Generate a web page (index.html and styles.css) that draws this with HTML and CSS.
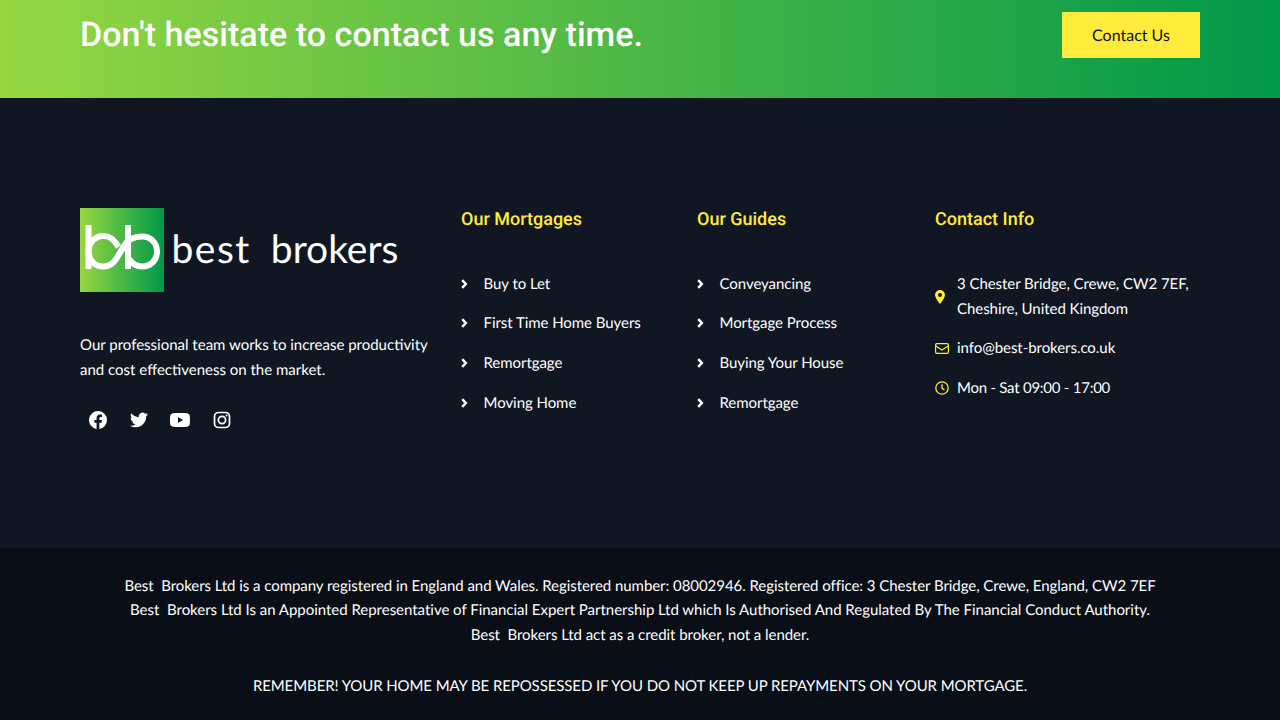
FILE: index.html
```html
<!DOCTYPE html>
<html lang="en">
  <head>
    <meta charset="UTF-8" />
    <meta name="viewport" content="width=device-width, initial-scale=1.0" />
    <title>Best Brokers</title>
    <link rel="stylesheet" href="styles.css">
  </head>
  <body>
    <section class="cta">
      <h2>Don't hesitate to contact us any time.</h2>
      <a class="cta-btn" href="#">Contact Us</a>
    </section>

    <footer class="footer">
      <div class="footer-about">
        <div class="logo">
          <div class="logo-mark">
            <svg width="84" height="84" viewBox="0 0 84 84" fill="none" stroke="#fff" stroke-width="6">
              <path d="M8.500 17V61" />
              <path d="M8.500 43.500C8.500 34.500 15 28 23.500 28C29 28 32.500 30.500 35.500 34.500L38.500 39" />
              <path d="M8.500 43.500C8.500 52.500 15 58.500 23.500 58.500C29.500 58.500 33.500 55 36.500 50.500L44 38C47.500 32 53 28.500 62 28.500C71 28.500 77 35 77 43.500C77 52 71 58.500 62 58.500C56 58.500 52 55.500 49 51" />
              <path d="M48 17V61" />
            </svg>
          </div>
          <span class="logo-word"><span class="logo-best">best</span> brokers</span>
        </div>
        <p>Our professional team works to increase productivity and cost effectiveness on the market.</p>
        <div class="social">
          <svg width="18" height="18" viewBox="0 0 24 24" fill="#fff"><path d="M24 12a12 12 0 1 0-13.900 11.900v-8.400H7.100V12h3V9.400c0-3 1.800-4.700 4.500-4.700 1.300 0 2.700.2 2.700.2v3h-1.500c-1.500 0-2 .9-2 1.900V12h3.400l-.5 3.500h-2.900v8.400A12 12 0 0 0 24 12z"/></svg>
          <svg width="18" height="18" viewBox="0 0 24 24" fill="#fff"><path d="M23.950 4.570a10 10 0 0 1-2.820.77 4.960 4.960 0 0 0 2.160-2.720c-.95.550-2 .96-3.130 1.190a4.920 4.920 0 0 0-8.380 4.480C7.690 8.090 4.060 6.130 1.640 3.160a4.820 4.820 0 0 0-.67 2.480c0 1.710.87 3.210 2.190 4.100a4.900 4.900 0 0 1-2.230-.62v.06a4.920 4.920 0 0 0 3.950 4.830 5 5 0 0 1-2.210.08 4.940 4.940 0 0 0 4.600 3.420A9.870 9.870 0 0 1 0 19.540a14 14 0 0 0 7.560 2.210c9.050 0 14-7.500 14-13.980 0-.21 0-.42-.02-.63a9.940 9.940 0 0 0 2.460-2.550z"/></svg>
          <svg width="20" height="20" viewBox="0 0 24 24" fill="#fff"><path d="M23.500 6.200a3 3 0 0 0-2.100-2.100C19.500 3.500 12 3.500 12 3.500s-7.500 0-9.400.6A3 3 0 0 0 .5 6.200C0 8.100 0 12 0 12s0 3.900.5 5.800a3 3 0 0 0 2.100 2.100c1.900.6 9.400.6 9.400.6s7.500 0 9.400-.6a3 3 0 0 0 2.100-2.100c.5-1.900.5-5.800.5-5.800s0-3.900-.5-5.800zM9.600 15.600V8.400l6.200 3.600-6.200 3.600z"/></svg>
          <svg width="18" height="18" viewBox="0 0 24 24" fill="none" stroke="#fff" stroke-width="2.300"><rect x="2" y="2" width="20" height="20" rx="5.500" /><circle cx="12" cy="12" r="4.800" /><circle cx="18.100" cy="5.900" r="1.300" fill="#fff" stroke="none" /></svg>
        </div>
      </div>

      <div class="footer-col">
        <h4>Our Mortgages</h4>
        <ul class="links">
          <li><svg class="chev" width="7" height="10" viewBox="0 0 7 10" fill="none" stroke="#fff" stroke-width="2.500"><path d="M1.200 1.200L4.800 5L1.200 8.800" /></svg>Buy to Let</li>
          <li><svg class="chev" width="7" height="10" viewBox="0 0 7 10" fill="none" stroke="#fff" stroke-width="2.500"><path d="M1.200 1.200L4.800 5L1.200 8.800" /></svg>First Time Home Buyers</li>
          <li><svg class="chev" width="7" height="10" viewBox="0 0 7 10" fill="none" stroke="#fff" stroke-width="2.500"><path d="M1.200 1.200L4.800 5L1.200 8.800" /></svg>Remortgage</li>
          <li><svg class="chev" width="7" height="10" viewBox="0 0 7 10" fill="none" stroke="#fff" stroke-width="2.500"><path d="M1.200 1.200L4.800 5L1.200 8.800" /></svg>Moving Home</li>
        </ul>
      </div>

      <div class="footer-col">
        <h4>Our Guides</h4>
        <ul class="links">
          <li><svg class="chev" width="7" height="10" viewBox="0 0 7 10" fill="none" stroke="#fff" stroke-width="2.500"><path d="M1.200 1.200L4.800 5L1.200 8.800" /></svg>Conveyancing</li>
          <li><svg class="chev" width="7" height="10" viewBox="0 0 7 10" fill="none" stroke="#fff" stroke-width="2.500"><path d="M1.200 1.200L4.800 5L1.200 8.800" /></svg>Mortgage Process</li>
          <li><svg class="chev" width="7" height="10" viewBox="0 0 7 10" fill="none" stroke="#fff" stroke-width="2.500"><path d="M1.200 1.200L4.800 5L1.200 8.800" /></svg>Buying Your House</li>
          <li><svg class="chev" width="7" height="10" viewBox="0 0 7 10" fill="none" stroke="#fff" stroke-width="2.500"><path d="M1.200 1.200L4.800 5L1.200 8.800" /></svg>Remortgage</li>
        </ul>
      </div>

      <div class="footer-col">
        <h4>Contact Info</h4>
        <ul class="contact">
          <li>
            <svg width="10" height="14" viewBox="0 0 10 14" preserveAspectRatio="xMinYMid" fill="#ffeb3b"><path fill-rule="evenodd" d="M5 0a5 5 0 0 1 5 5c0 2.500-3 6.500-5 9C3 11.500 0 7.500 0 5a5 5 0 0 1 5-5zm0 3a2 2 0 1 0 0 4 2 2 0 0 0 0-4z"/></svg>
            <span>3 Chester Bridge, Crewe, CW2 7EF, Cheshire, United Kingdom</span>
          </li>
          <li>
            <svg width="14" height="11" viewBox="0 0 14 11" fill="none" stroke="#ffeb3b" stroke-width="1.200"><rect x=".6" y=".6" width="12.800" height="9.800" rx="1.300" /><path d="M.8 3l6.200 4 6.200-4" /></svg>
            <span>info@best-brokers.co.uk</span>
          </li>
          <li>
            <svg width="14" height="14" viewBox="0 0 14 14" fill="none" stroke="#ffeb3b" stroke-width="1.300"><circle cx="7" cy="7" r="6.200" /><path d="M7 3.200V7.300L9.500 9" /></svg>
            <span class="hours">Mon - Sat 09:00 - 17:00</span>
          </li>
        </ul>
      </div>
    </footer>

    <section class="legal">
      <p>Best &nbsp;Brokers Ltd is a company registered in England and Wales. Registered number: 08002946. Registered office: 3 Chester Bridge, Crewe, England, CW2 7EF</p>
      <p class="authorised">Best &nbsp;Brokers Ltd Is an Appointed Representative of Financial Expert Partnership Ltd which Is Authorised And Regulated By The Financial Conduct Authority.</p>
      <p>Best &nbsp;Brokers Ltd act as a credit broker, not a lender.</p>
      <p class="warning">REMEMBER! YOUR HOME MAY BE REPOSSESSED IF YOU DO NOT KEEP UP REPAYMENTS ON YOUR MORTGAGE.</p>
    </section>
  </body>
</html>
```

FILE: styles.css
```css
body {
  margin: 0;
  font-family: Lato, sans-serif;
  font-size: 15px;
  letter-spacing: -0.050px;
  color: #fff;
  background-color: #111722;
  overflow: hidden;
  text-rendering: geometricPrecision;
}
.cta {
  height: 98px;
  box-sizing: border-box;
  padding: 12px 80px 0;
  display: flex;
  justify-content: space-between;
  align-items: flex-start;
  background: linear-gradient(90deg, #96d742 0%, #00984a 100%);
}
.cta h2 {
  margin: 0;
  font-family: Roboto, sans-serif;
  font-size: 34px;
  font-weight: 500;
  letter-spacing: 0.040px;
  line-height: 46px;
}
.cta-btn {
  width: 138px;
  height: 46px;
  display: flex;
  align-items: center;
  justify-content: center;
  background-color: #ffeb3b;
  color: #111;
  font-size: 16px;
  letter-spacing: 0;
  text-decoration: none;
}
.footer {
  height: 450px;
  box-sizing: border-box;
  padding: 110px 80px 0;
  display: grid;
  grid-template-columns: 381px 236px 238px 265px;
}
.logo {
  display: flex;
  align-items: center;
  gap: 7.500px;
  height: 84px;
}
.logo-mark {
  width: 84px;
  height: 84px;
  background: linear-gradient(90deg, #96d742 0%, #00984a 100%);
}
.logo-word {
  padding-bottom: 2px;
  font-size: 39px;
  letter-spacing: 0;
  line-height: 1;
  word-spacing: 10px;
  white-space: nowrap;
}
.logo-best {
  letter-spacing: 1.500px;
}
.footer-about p {
  margin: 40.500px 0 0;
  width: 360px;
  line-height: 25px;
  letter-spacing: 0;
}
.social {
  display: flex;
  align-items: center;
  gap: 22.500px;
  margin-top: 27px;
  padding-left: 9px;
}
.footer-col h4 {
  margin: 0;
  font-family: Roboto, sans-serif;
  font-size: 18px;
  font-weight: 500;
  letter-spacing: 0;
  line-height: 24px;
  color: #ffeb3b;
}
.links,
.contact {
  list-style: none;
  margin: 0;
  padding: 0;
}
.links {
  margin-top: 39.500px;
}
.links li {
  display: flex;
  align-items: center;
  height: 24px;
  margin-bottom: 15.700px;
}
.chev {
  margin-right: 15.500px;
}
.contact {
  margin-top: 39.500px;
}
.contact li {
  display: flex;
  align-items: center;
  gap: 8px;
  line-height: 25px;
  margin-bottom: 14.500px;
}
.contact svg {
  flex: 0 0 14px;
}
.hours {
  letter-spacing: -0.250px;
}
.legal {
  height: 172px;
  box-sizing: border-box;
  padding-top: 26px;
  background-color: #0a0f17;
  text-align: center;
}
.legal p {
  margin: 0;
  line-height: 24.400px;
}
.legal .authorised {
  letter-spacing: -0.020px;
}
.legal .warning {
  margin-top: 27px;
  letter-spacing: -0.090px;
}
```
